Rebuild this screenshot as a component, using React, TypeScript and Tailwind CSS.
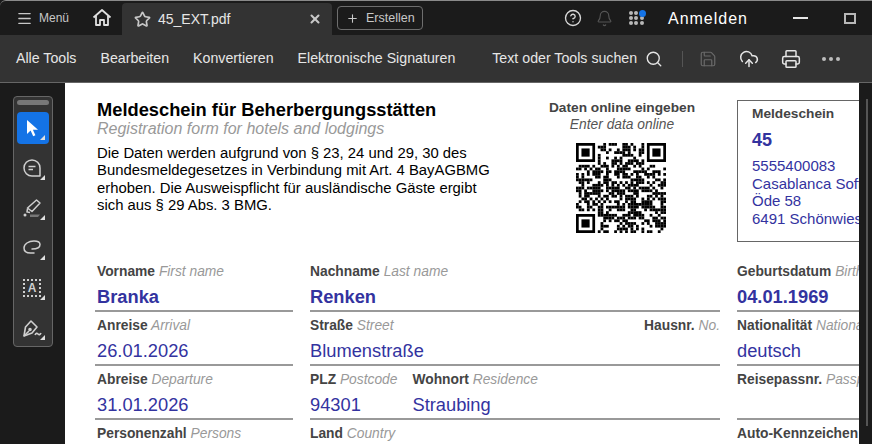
import { Menu, Star, X, Plus, CircleHelp, Bell, Search, Save, CloudUpload, Printer } from 'lucide-react';

const ink = 'text-[#33339f]';

// pseudo QR pattern, only has to look like the printed code
function qrCells() {
  const n = 33;
  const cells: [number, number][] = [];
  let seed = 4711;
  const inFinder = (x: number, y: number) =>
    (x < 8 && y < 8) || (x >= n - 8 && y < 8) || (x < 8 && y >= n - 8);
  for (let y = 0; y < n; y++) {
    for (let x = 0; x < n; x++) {
      seed = (seed * 1103515245 + 12345) & 0x7fffffff;
      if (!inFinder(x, y) && (seed >> 16) % 100 < 52) cells.push([x, y]);
    }
  }
  return cells;
}

function Finder({ x, y }: { x: number; y: number }) {
  return (
    <g>
      <path d={`M${x} ${y}h7v7h-7z M${x + 1} ${y + 1}v5h5v-5z`} fillRule="evenodd" />
      <rect x={x + 2} y={y + 2} width={3} height={3} />
    </g>
  );
}

function QrCode() {
  return (
    <svg viewBox="0 0 33 33" className="w-[90px] h-[90px] mt-[10px] -ml-[2px]" fill="#000">
      <Finder x={0} y={0} />
      <Finder x={26} y={0} />
      <Finder x={0} y={26} />
      {qrCells().map(([x, y]) => (
        <rect key={`${x}-${y}`} x={x} y={y} width={1.02} height={1.02} />
      ))}
    </svg>
  );
}

function ToolButton({ children, active }: { children: React.ReactNode; active?: boolean }) {
  return (
    <div className={`relative w-8 h-8 flex items-center justify-center rounded-sm text-[#cfcfcf] ${active ? 'bg-[#1473e6]' : ''}`}>
      {children}
      <span className="absolute right-[4px] bottom-[4px] w-0 h-0 border-l-[5px] border-l-transparent border-b-[5px] border-b-[#e0e0e0]" />
    </div>
  );
}

function ToolRail() {
  return (
    <aside className="w-[65px] shrink-0 bg-[#1b1b1b] pl-[13px] pt-[13px]">
      <div className="w-10 h-[251px] rounded border border-[#666] bg-[#333] px-[3px] pt-[3px] flex flex-col items-center">
        <div className="w-8 h-[5px] rounded-sm bg-[#777] mb-[7px]" />
        <div className="flex flex-col gap-2">
          <ToolButton active>
            <svg width="18" height="20" viewBox="0 0 18 20" className="-ml-[3px]">
              <path d="M4 2v14l3.6-3.4 2.6 5.6 2.2-1-2.5-5.4H15z" fill="#fff" />
            </svg>
          </ToolButton>
          <ToolButton>
            <svg width="20" height="20" viewBox="0 0 20 20" fill="none" stroke="currentColor" strokeWidth="1.5" className="-ml-[2px]">
              <path d="M10 2a8 8 0 1 0 0 16h8v-8a8 8 0 0 0-8-8z" strokeLinejoin="round" />
              <path d="M6.5 8.5h7M6.5 11.5h4.5" />
            </svg>
          </ToolButton>
          <ToolButton>
            <svg width="20" height="20" viewBox="0 0 20 20" fill="none" stroke="currentColor" strokeWidth="1.5" className="-ml-[3px]">
              <path d="M14.5 2l3.5 3-8 8.5-4.5-3.5z" strokeLinejoin="round" />
              <path d="M5.5 10.5L5 14l3 .5" />
              <path d="M8 16.5h10l-2 2.5H8z" fill="#777" stroke="none" />
              <circle cx="3" cy="17" r="1.5" fill="currentColor" stroke="none" />
            </svg>
          </ToolButton>
          <ToolButton>
            <svg width="20" height="20" viewBox="0 0 20 20" fill="none" stroke="currentColor" strokeWidth="1.5" className="-ml-[3px]">
              <path d="M10 11c3.500 0 8-1 8-4.500C18 4 15 3 12 3 6.500 3 2 6 2 10c0 3 2.500 5 6.500 5H12" strokeLinecap="round" />
            </svg>
          </ToolButton>
          <ToolButton>
            <div className="-ml-[2px] w-[18px] h-[18px] border-2 border-dotted border-[#cfcfcf] flex items-center justify-center text-[12px] font-bold leading-none">
              A
            </div>
          </ToolButton>
          <ToolButton>
            <svg width="21" height="20" viewBox="0 0 21 20" fill="none" stroke="currentColor" strokeWidth="1.6" className="-ml-[2px]">
              <path d="M2 18l1.500-9L9 3l6 6-5 6z" strokeLinejoin="round" />
              <path d="M2 18l5-5" />
              <circle cx="8" cy="11.500" r="1" fill="currentColor" />
              <path d="M13 17c1-2 2-2 3-1s2 1 3-1" />
            </svg>
          </ToolButton>
        </div>
      </div>
    </aside>
  );
}

function Label({ de, en, className }: { de: string; en?: string; className?: string }) {
  return (
    <div className={`text-[13.8px] leading-[15px] whitespace-nowrap ${className ?? ''}`}>
      <span className="font-bold text-[#444]">{de}</span>
      {en && <span className="italic text-[#999]"> {en}</span>}
    </div>
  );
}

function Value({ children, bold }: { children?: React.ReactNode; bold?: boolean }) {
  return (
    <div className={`text-[18.3px] leading-[21px] mt-[7px] h-[21px] whitespace-nowrap ${ink} ${bold ? 'font-bold' : ''}`}>
      {children}
    </div>
  );
}

function Field({ de, en, value, bold, rule = true, indent }: { de: string; en?: string; value?: string; bold?: boolean; rule?: boolean; indent?: boolean }) {
  return (
    <div className={`h-[54px] pt-[6px] ${rule ? 'border-b-2 border-b-[#999]' : ''} ${indent ? 'pl-[2px]' : ''}`}>
      <Label de={de} en={en} />
      <Value bold={bold}>{value}</Value>
    </div>
  );
}

function FormPage() {
  return (
    <main className="w-[794px] shrink-0 bg-white overflow-hidden">
      <div className="flex pl-[32px] pt-[17px] h-[175px]">
        <div className="w-[440px] shrink-0">
          <h1 className="text-[18.3px] leading-5 font-bold text-black">Meldeschein für Beherbergungsstätten</h1>
          <p className="text-[16px] leading-[18px] italic text-[#999]">Registration form for hotels and lodgings</p>
          <p className="text-[14.85px] leading-[17.4px] text-black mt-[7px] w-[400px]">
            Die Daten werden aufgrund von § 23, 24 und 29, 30 des Bundesmeldegesetzes in Verbindung mit Art. 4 BayAGBMG erhoben. Die Ausweispflicht für ausländische Gäste ergibt sich aus § 29 Abs. 3 BMG.
          </p>
        </div>
        <div className="w-[170px] shrink-0 flex flex-col items-center">
          <div className="text-[13.7px] leading-4 font-bold text-[#444]">Daten online eingeben</div>
          <div className="text-[13.8px] leading-4 italic text-[#555] mt-[1px]">Enter data online</div>
          <QrCode />
        </div>
        <div className="shrink-0 ml-[30px] w-[180px] h-[142px] border border-[#666] pl-[14px] pt-[5px] whitespace-nowrap">
          <div className="text-[13.7px] leading-4 font-bold text-[#444]">Meldeschein</div>
          <div className={`text-[18px] leading-5 font-bold mt-[8px] ${ink}`}>45</div>
          <div className={`text-[15px] leading-[17.5px] mt-[7px] ${ink}`}>
            <div>5555400083</div>
            <div>Casablanca Software</div>
            <div>Öde 58</div>
            <div>6491 Schönwies</div>
          </div>
        </div>
      </div>
      <div className="grid grid-cols-[198px_410px_200px] gap-x-[17px] pl-[30px]">
        <div>
          <Field indent de="Vorname" en="First name" value="Branka" bold />
          <Field indent de="Anreise" en="Arrival" value="26.01.2026" />
          <Field indent de="Abreise" en="Departure" value="31.01.2026" />
          <Field indent de="Personenzahl" en="Persons" rule={false} />
        </div>
        <div>
          <Field de="Nachname" en="Last name" value="Renken" bold />
          <div className="relative">
            <Field de="Straße" en="Street" value="Blumenstraße" />
            <Label de="Hausnr." en="No." className="absolute right-0 top-[6px]" />
          </div>
          <div className="flex gap-[15px] h-[54px] border-b-2 border-b-[#999] pt-[6px]">
            <div>
              <Label de="PLZ" en="Postcode" />
              <Value>94301</Value>
            </div>
            <div>
              <Label de="Wohnort" en="Residence" />
              <Value>Straubing</Value>
            </div>
          </div>
          <Field de="Land" en="Country" rule={false} />
        </div>
        <div>
          <Field de="Geburtsdatum" en="Birth date" value="04.01.1969" bold />
          <Field de="Nationalität" en="Nationality" value="deutsch" />
          <Field de="Reisepassnr." en="Passport no." />
          <Field de="Auto-Kennzeichen" en="Licence plate" rule={false} />
        </div>
      </div>
    </main>
  );
}

export default function App() {
  return (
    <div className="w-[872px] h-[444px] overflow-hidden flex flex-col bg-[#1b1b1b] text-[#e6e6e6] font-['Liberation_Sans',sans-serif]">
      {/* Title bar with tabs */}
      <header className="h-[35px] shrink-0 flex items-stretch bg-[#1b1b1b] border-t border-t-[#8a8a8a] rounded-tl-md">
        <div className="w-[122px] shrink-0 flex items-center pl-[16px]">
          <Menu size={17} strokeWidth={1.8} className="text-[#c8c8c8]" />
          <span className="ml-[6px] text-[12px] text-[#c8c8c8]">Menü</span>
          <svg width="20" height="20" viewBox="0 0 20 20" fill="none" stroke="#e0e0e0" strokeWidth="1.8" strokeLinejoin="round" className="ml-[23px]">
            <path d="M1.500 9.500L10 2l8.500 7.500" />
            <path d="M4 8v9h4v-5h4v5h4V8" />
          </svg>
        </div>
        <div className="w-[210px] h-[32px] mt-[2px] shrink-0 bg-[#333] rounded-t-sm flex items-center pl-[12px] pr-[10px]">
          <Star size={17} strokeWidth={2.4} className="text-[#c8c8c8]" />
          <span className="ml-[7px] text-[14px] text-[#e6e6e6]">45_EXT.pdf</span>
          <X size={14} strokeWidth={3.5} className="ml-auto text-[#c8c8c8]" />
        </div>
        <div className="ml-[5px] my-auto h-6 w-[86px] rounded-[4px] border border-[#6e6e6e] flex items-center pl-[8px] text-[12.5px] text-[#c8c8c8]">
          <Plus size={13} strokeWidth={2} />
          <span className="ml-[7px]">Erstellen</span>
        </div>
        <div className="ml-auto flex items-center">
          <CircleHelp size={18} strokeWidth={1.8} className="text-[#d8d8d8]" />
          <Bell size={17} strokeWidth={1.6} className="ml-[14px] text-[#555]" />
          <div className="relative ml-[16px] w-[15px] h-[14px] grid grid-cols-3 gap-[1px]">
            {Array.from({ length: 9 }).map((_, i) => (
              <span key={i} className="w-1 h-1 rounded-full bg-[#b8b8b8]" />
            ))}
            <span className="absolute -top-[1px] -right-[2px] w-[7px] h-[7px] rounded-full bg-[#1473e6]" />
          </div>
          <span className="ml-[24px] mt-[1px] text-[16px] tracking-[1px] text-white">Anmelden</span>
          <span className="ml-[45px] w-[15px] h-[2px] bg-[#e6e6e6]" />
          <span className="ml-[36px] mr-[16px] w-[12px] h-[11px] border-2 border-[#b8b8b8]" />
        </div>
      </header>

      {/* Tool bar */}
      <nav className="h-[48px] shrink-0 bg-[#333] border-b border-b-[#666] flex items-center pl-[16px] text-[14.2px] text-[#e6e6e6]">
        <span>Alle Tools</span>
        <span className="ml-[24px]">Bearbeiten</span>
        <span className="ml-[24px]">Konvertieren</span>
        <span className="ml-[24px]">Elektronische Signaturen</span>
        <span className="ml-[37px]">Text oder Tools suchen</span>
        <Search size={18} strokeWidth={1.8} className="ml-[8px]" />
        <span className="ml-[19px] w-[1px] h-4 bg-[#555]" />
        <Save size={18} strokeWidth={1.6} className="ml-[16px] text-[#6a6a6a]" />
        <CloudUpload size={20} strokeWidth={1.8} className="ml-[22px]" />
        <Printer size={20} strokeWidth={1.8} className="ml-[22px]" />
        <div className="ml-[21px] flex gap-[3px]">
          <span className="w-1 h-1 rounded-full bg-[#bdbdbd]" />
          <span className="w-1 h-1 rounded-full bg-[#bdbdbd]" />
          <span className="w-1 h-1 rounded-full bg-[#bdbdbd]" />
        </div>
      </nav>

      {/* Document area */}
      <div className="flex-1 min-h-0 flex">
        <ToolRail />
        <FormPage />
        <div className="flex-1 bg-[#1b1b1b] pt-[16px] pl-[7px]">
          <div className="w-[2px] h-[327px] bg-[#555]" />
        </div>
      </div>
    </div>
  );
}
